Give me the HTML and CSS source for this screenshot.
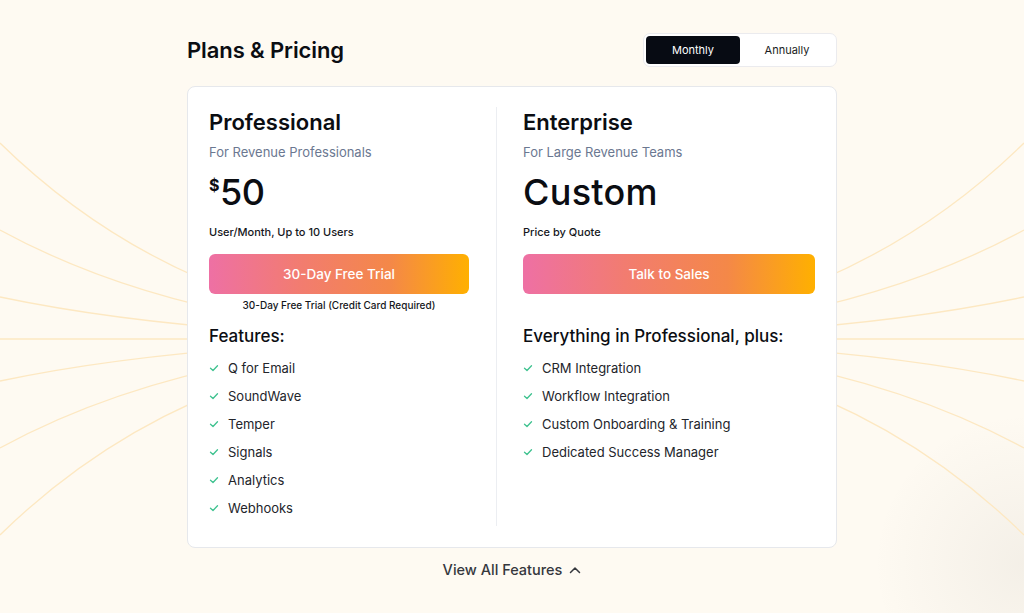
FILE: index.html
```html
<!DOCTYPE html>
<html>
<head>
<meta charset="utf-8">
<link rel="stylesheet" href="styles.css">
</head>
<body>
<svg class="rays" width="1024" height="613" viewBox="0 0 1024 613">
  <g fill="none" stroke="#fde8c2" stroke-width="1.3">
    <path d="M0 143 Q200 339 512 339"/>
    <path d="M0 230 Q200 339 512 339"/>
    <path d="M0 297 Q200 339 512 339"/>
    <path d="M0 339 L1024 339"/>
    <path d="M0 381 Q200 339 512 339"/>
    <path d="M0 448 Q200 339 512 339"/>
    <path d="M0 535 Q200 339 512 339"/>
    <path d="M1024 143 Q824 339 512 339"/>
    <path d="M1024 230 Q824 339 512 339"/>
    <path d="M1024 297 Q824 339 512 339"/>
    <path d="M1024 381 Q824 339 512 339"/>
    <path d="M1024 448 Q824 339 512 339"/>
    <path d="M1024 535 Q824 339 512 339"/>
  </g>
</svg>

<div class="page">
  <div class="header">
    <h1 class="title">Plans &amp; Pricing</h1>
    <div class="toggle">
      <span class="toggle-item active">Monthly</span>
      <span class="toggle-item">Annually</span>
    </div>
  </div>

  <div class="card">
    <div class="plan plan-first">
      <h2 class="plan-name">Professional</h2>
      <div class="plan-sub">For Revenue Professionals</div>
      <div class="plan-price"><span class="currency">$</span>50</div>
      <div class="plan-unit">User/Month, Up to 10 Users</div>
      <a class="plan-btn" href="#">30-Day Free Trial</a>
      <div class="plan-note">30-Day Free Trial (Credit Card Required)</div>
      <h3 class="features-title">Features:</h3>
      <ul class="features">
        <li><svg class="check" viewBox="0 0 10 10"><path d="M1.5 5.2 L4 7.5 L8.5 2.8"/></svg>Q for Email</li>
        <li><svg class="check" viewBox="0 0 10 10"><path d="M1.5 5.2 L4 7.5 L8.5 2.8"/></svg>SoundWave</li>
        <li><svg class="check" viewBox="0 0 10 10"><path d="M1.5 5.2 L4 7.5 L8.5 2.8"/></svg>Temper</li>
        <li><svg class="check" viewBox="0 0 10 10"><path d="M1.5 5.2 L4 7.5 L8.5 2.8"/></svg>Signals</li>
        <li><svg class="check" viewBox="0 0 10 10"><path d="M1.5 5.2 L4 7.5 L8.5 2.8"/></svg>Analytics</li>
        <li><svg class="check" viewBox="0 0 10 10"><path d="M1.5 5.2 L4 7.5 L8.5 2.8"/></svg>Webhooks</li>
      </ul>
    </div>
    <div class="plan plan-second">
      <h2 class="plan-name">Enterprise</h2>
      <div class="plan-sub">For Large Revenue Teams</div>
      <div class="plan-price plan-custom">Custom</div>
      <div class="plan-unit">Price by Quote</div>
      <a class="plan-btn" href="#">Talk to Sales</a>
      <h3 class="features-title spaced">Everything in Professional, plus:</h3>
      <ul class="features">
        <li><svg class="check" viewBox="0 0 10 10"><path d="M1.5 5.2 L4 7.5 L8.5 2.8"/></svg>CRM Integration</li>
        <li><svg class="check" viewBox="0 0 10 10"><path d="M1.5 5.2 L4 7.5 L8.5 2.8"/></svg>Workflow Integration</li>
        <li><svg class="check" viewBox="0 0 10 10"><path d="M1.5 5.2 L4 7.5 L8.5 2.8"/></svg>Custom Onboarding &amp; Training</li>
        <li><svg class="check" viewBox="0 0 10 10"><path d="M1.5 5.2 L4 7.5 L8.5 2.8"/></svg>Dedicated Success Manager</li>
      </ul>
    </div>
  </div>

  <div class="more">
    <a href="#" class="more-link">View All Features
      <svg class="chevron" viewBox="0 0 12 8"><path d="M1.5 6.5 L6 2 L10.5 6.5"/></svg>
    </a>
  </div>
</div>
</body>
</html>
```

FILE: styles.css
```css
html, body {
	margin:0;
	padding:0;
}
body {
	width:1024px;
	height:613px;
	overflow:hidden;
	position:relative;
	font-family:Inter, "Noto Sans", sans-serif;
	color:#0b0d12;
	background-color:#fefaf2;
	background-image:radial-gradient(circle at 100% 92%, rgba(110,100,90,0.07), rgba(110,100,90,0) 150px);
}
.rays {
	position:absolute;
	left:0;
	top:0;
	z-index:0;
}
.page {
	position:relative;
	z-index:1;
	width:650px;
	margin:0 auto;
	padding-top:33px;
}
.header {
	display:flex;
	align-items:center;
	justify-content:space-between;
}
.title {
	margin:0;
	font-size:22px;
	line-height:30px;
	font-weight:600;
	letter-spacing:-0.1px;
}
.toggle {
	display:flex;
	padding:2px;
	background:#fff;
	border:1px solid #ebebee;
	border-radius:7px;
}
.toggle-item {
	width:94px;
	height:28px;
	line-height:28px;
	text-align:center;
	font-size:11px;
	font-weight:400;
	color:#1a1c22;
	border-radius:4px;
}
.toggle-item.active {
	background:#070b13;
	color:#fff;
}
.card {
	margin-top:19px;
	display:flex;
	background:#fff;
	border:1px solid #e6e8ec;
	border-radius:8px;
	padding:20px 21px 21px 21px;
}
.plan-first {
	width:260px;
	padding-right:27px;
	border-right:1px solid #eceef2;
}
.plan-second {
	flex:1;
	padding-left:26px;
}
.plan-name {
	margin:0;
	font-size:22px;
	line-height:30px;
	font-weight:600;
}
.plan-sub {
	margin-top:5px;
	font-size:13px;
	line-height:20px;
	color:#6b7891;
}
.plan-price {
	margin-top:8px;
	font-size:36px;
	line-height:44px;
	font-weight:500;
	letter-spacing:-0.5px;
}
.plan-price .currency {
	display:inline-block;
	vertical-align:top;
	margin-top:7px;
	margin-right:1px;
	font-size:16px;
	line-height:16px;
	font-weight:700;
}
.plan-custom {
	font-weight:500;
	letter-spacing:0.3px;
}
.plan-unit {
	margin-top:10px;
	font-size:11px;
	line-height:16px;
	font-weight:500;
	color:#15171c;
}
.plan-btn {
	display:block;
	margin-top:14px;
	height:40px;
	line-height:40px;
	border-radius:6px;
	text-align:center;
	text-decoration:none;
	color:#fff;
	font-size:13.5px;
	font-weight:500;
	background:linear-gradient(90deg, #ee70a4 0%, #f27c70 35%, #f48848 70%, #ffb000 100%);
}
.plan-note {
	margin-top:4px;
	font-size:10px;
	line-height:14px;
	font-weight:500;
	text-align:center;
	color:#15171c;
}
.features-title {
	margin:12px 0 0;
	font-size:17px;
	line-height:24px;
	font-weight:500;
}
.features-title.spaced {
	margin-top:30px;
}
.features {
	list-style:none;
	margin:10px 0 0;
	padding:0;
}
.features li {
	display:flex;
	align-items:center;
	height:20px;
	margin-bottom:8px;
	font-size:13px;
	color:#23252b;
}
.check {
	width:10px;
	height:10px;
	margin-right:9px;
	fill:none;
	stroke:#3ec28f;
	stroke-width:1.3;
	stroke-linecap:round;
	stroke-linejoin:round;
}
.more {
	margin-top:11px;
	text-align:center;
}
.more-link {
	display:inline-flex;
	align-items:center;
	font-size:14.5px;
	line-height:20px;
	font-weight:500;
	color:#35373d;
	text-decoration:none;
}
.chevron {
	width:12px;
	height:8px;
	margin-left:7px;
	fill:none;
	stroke:#35373d;
	stroke-width:1.5;
	stroke-linecap:round;
	stroke-linejoin:round;
}
```
